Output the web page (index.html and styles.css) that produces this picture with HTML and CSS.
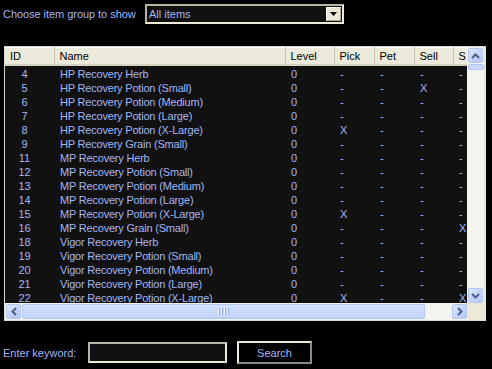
FILE: index.html
```html
<!DOCTYPE html>
<html>
<head>
<meta charset="utf-8">
<link rel="stylesheet" href="styles.css">
</head>
<body>
<div class="top">
  <span class="label group-label">Choose item group to show</span>
  <div class="select">
    <span class="select-text">All items</span>
    <span class="select-btn"><svg width="7" height="4" viewBox="0 0 7 4"><path d="M0 0H7L3.5 4Z" fill="#000"/></svg></span>
  </div>
</div>

<div class="listbox">
  <div class="viewport">
    <table class="grid">
      <colgroup>
        <col class="c-id"><col class="c-name"><col class="c-level"><col class="c-pick"><col class="c-pet"><col class="c-sell"><col class="c-s">
      </colgroup>
      <thead>
        <tr><th>ID</th><th>Name</th><th>Level</th><th>Pick</th><th>Pet</th><th>Sell</th><th>S</th></tr>
      </thead>
      <tbody>
        <tr><td class="id">4</td><td>HP Recovery Herb</td><td>0</td><td>-</td><td>-</td><td>-</td><td>-</td></tr>
        <tr><td class="id">5</td><td>HP Recovery Potion (Small)</td><td>0</td><td>-</td><td>-</td><td>X</td><td>-</td></tr>
        <tr><td class="id">6</td><td>HP Recovery Potion (Medium)</td><td>0</td><td>-</td><td>-</td><td>-</td><td>-</td></tr>
        <tr><td class="id">7</td><td>HP Recovery Potion (Large)</td><td>0</td><td>-</td><td>-</td><td>-</td><td>-</td></tr>
        <tr><td class="id">8</td><td>HP Recovery Potion (X-Large)</td><td>0</td><td>X</td><td>-</td><td>-</td><td>-</td></tr>
        <tr><td class="id">9</td><td>HP Recovery Grain (Small)</td><td>0</td><td>-</td><td>-</td><td>-</td><td>-</td></tr>
        <tr><td class="id">11</td><td>MP Recovery Herb</td><td>0</td><td>-</td><td>-</td><td>-</td><td>-</td></tr>
        <tr><td class="id">12</td><td>MP Recovery Potion (Small)</td><td>0</td><td>-</td><td>-</td><td>-</td><td>-</td></tr>
        <tr><td class="id">13</td><td>MP Recovery Potion (Medium)</td><td>0</td><td>-</td><td>-</td><td>-</td><td>-</td></tr>
        <tr><td class="id">14</td><td>MP Recovery Potion (Large)</td><td>0</td><td>-</td><td>-</td><td>-</td><td>-</td></tr>
        <tr><td class="id">15</td><td>MP Recovery Potion (X-Large)</td><td>0</td><td>X</td><td>-</td><td>-</td><td>-</td></tr>
        <tr><td class="id">16</td><td>MP Recovery Grain (Small)</td><td>0</td><td>-</td><td>-</td><td>-</td><td>X</td></tr>
        <tr><td class="id">18</td><td>Vigor Recovery Herb</td><td>0</td><td>-</td><td>-</td><td>-</td><td>-</td></tr>
        <tr><td class="id">19</td><td>Vigor Recovery Potion (Small)</td><td>0</td><td>-</td><td>-</td><td>-</td><td>-</td></tr>
        <tr><td class="id">20</td><td>Vigor Recovery Potion (Medium)</td><td>0</td><td>-</td><td>-</td><td>-</td><td>-</td></tr>
        <tr><td class="id">21</td><td>Vigor Recovery Potion (Large)</td><td>0</td><td>-</td><td>-</td><td>-</td><td>-</td></tr>
        <tr><td class="id">22</td><td>Vigor Recovery Potion (X-Large)</td><td>0</td><td>X</td><td>-</td><td>-</td><td>X</td></tr>
      </tbody>
    </table>
  </div>
  <div class="vscroll">
    <div class="sb-btn"><svg width="9" height="6" viewBox="0 0 9 6"><path d="M1 5L4.5 1.5L8 5" fill="none" stroke="#4d6185" stroke-width="2"/></svg></div>
    <div class="v-thumb"></div>
    <div class="v-track"></div>
    <div class="sb-btn"><svg width="9" height="6" viewBox="0 0 9 6"><path d="M1 1L4.5 4.5L8 1" fill="none" stroke="#4d6185" stroke-width="2"/></svg></div>
  </div>
  <div class="hscroll">
    <div class="sb-btn"><svg width="6" height="9" viewBox="0 0 6 9"><path d="M5 1L1.5 4.5L5 8" fill="none" stroke="#4d6185" stroke-width="2"/></svg></div>
    <div class="h-thumb"><span class="grip"></span><span class="grip"></span><span class="grip"></span><span class="grip"></span></div>
    <div class="h-track"></div>
    <div class="sb-btn"><svg width="6" height="9" viewBox="0 0 6 9"><path d="M1 1L4.5 4.5L1 8" fill="none" stroke="#4d6185" stroke-width="2"/></svg></div>
  </div>
  <div class="corner"></div>
</div>

<div class="bottom">
  <span class="label kw-label">Enter keyword:</span>
  <div class="input"></div>
  <div class="button">Search</div>
</div>
</body>
</html>
```

FILE: styles.css
```css
html, body {
  margin: 0;
  padding: 0;
  background: #000;
}
body {
  width: 492px;
  height: 369px;
  overflow: hidden;
  font-family: "Liberation Sans", Arial, sans-serif;
  font-size: 11px;
  color: #a3b6f7;
}
.top {
  display: flex;
  align-items: center;
  padding: 4px 0 0 3px;
  height: 20px;
}
.group-label {
  flex: 0 0 142px;
  letter-spacing: -0.05px;
}
.select {
  width: 195px;
  height: 16px;
  border: 2px solid #ece9d8;
  border-top-color: #b8b5a8;
  border-left-color: #b8b5a8;
  background: #111;
  display: flex;
  align-items: center;
}
.select-text {
  flex: 1;
  padding-left: 2px;
  color: #a3b6f7;
}
.select-btn {
  width: 15px;
  height: 14px;
  margin-right: 1px;
  background: #ece9d8;
  border: 1px solid #fff;
  border-right-color: #aca899;
  border-bottom-color: #aca899;
  box-sizing: border-box;
  display: flex;
  align-items: center;
  justify-content: center;
}

.listbox {
  margin: 22px 0 0 4px;
  width: 482px;
  height: 275px;
  box-sizing: border-box;
  border: 1px solid #d9d7cc;
  border-right: 2px solid #e6e4da;
  display: grid;
  grid-template-columns: 1fr 17px;
  grid-template-rows: 1fr 17px;
  background: #111;
}
.viewport {
  overflow: hidden;
  position: relative;
}
.grid {
  border-collapse: collapse;
  table-layout: fixed;
  width: 500px;
}
.c-id { width: 49px; }
.c-name { width: 231px; }
.c-level { width: 49px; }
.c-pick { width: 40px; }
.c-pet { width: 40px; }
.c-sell { width: 39px; }
.c-s { width: 52px; }
.grid th {
  height: 16px;
  padding: 0 0 0 5px;
  text-align: left;
  font-weight: normal;
  color: #000;
  background: #ebeadb;
  border-right: 1px solid #c7c5b2;
  border-bottom: 2px solid #d6d2c2;
  border-top: 1px solid #fff;
  white-space: nowrap;
  overflow: hidden;
}
.grid tbody tr:first-child td {
  padding-top: 1px;
}
.grid td {
  height: 14px;
  padding: 0 0 0 6px;
  line-height: 14px;
  white-space: nowrap;
  overflow: hidden;
  letter-spacing: -0.2px;
}
.grid td.id {
  text-align: center;
  padding: 0 10px 0 0;
  letter-spacing: 0;
}

.vscroll {
  display: flex;
  flex-direction: column;
  background: #f4f3ee;
  padding: 1px 0 0 1px;
}
.sb-btn {
  flex: 0 0 auto;
  width: 15px;
  height: 15px;
  box-sizing: border-box;
  border: 1px solid #b3c6f0;
  border-radius: 2px;
  background: linear-gradient(135deg, #dde7fe 0%, #c1d2fb 60%, #b4c8f6 100%);
  display: flex;
  align-items: center;
  justify-content: center;
}
.v-thumb {
  height: 6px;
  margin-top: 1px;
  box-sizing: border-box;
  border: 1px solid #b3c6f0;
  border-radius: 2px;
  background: #c9d8fc;
}
.v-track {
  flex: 1;
}
.hscroll {
  display: flex;
  background: #f4f3ee;
  padding: 1px 0 0 1px;
}
.h-thumb {
  width: 403px;
  height: 15px;
  margin-left: 1px;
  box-sizing: border-box;
  border: 1px solid #b3c6f0;
  border-radius: 2px;
  background: linear-gradient(180deg, #d4e0fd 0%, #c2d3fc 100%);
  display: flex;
  align-items: center;
  justify-content: center;
  gap: 1px;
}
.grip {
  width: 1px;
  height: 7px;
  background: #eef3ff;
  box-shadow: 1px 0 0 #8ca6e6;
  margin-right: 1px;
}
.h-track {
  flex: 1;
}
.corner {
  background: #ece9d8;
}

.bottom {
  display: flex;
  align-items: center;
  margin-top: 20px;
  padding-left: 3px;
  height: 23px;
}
.kw-label {
  flex: 0 0 85px;
}
.input {
  width: 139px;
  height: 21px;
  box-sizing: border-box;
  border: 2px solid #ece9d8;
  border-top-color: #b8b5a8;
  border-left-color: #b8b5a8;
  background: #111;
}
.button {
  margin-left: 10px;
  width: 75px;
  height: 23px;
  box-sizing: border-box;
  border: 2px solid #ece9d8;
  border-right-color: #8c8a80;
  border-bottom-color: #8c8a80;
  background: #000;
  display: flex;
  align-items: center;
  justify-content: center;
  color: #a3b6f7;
}
```
